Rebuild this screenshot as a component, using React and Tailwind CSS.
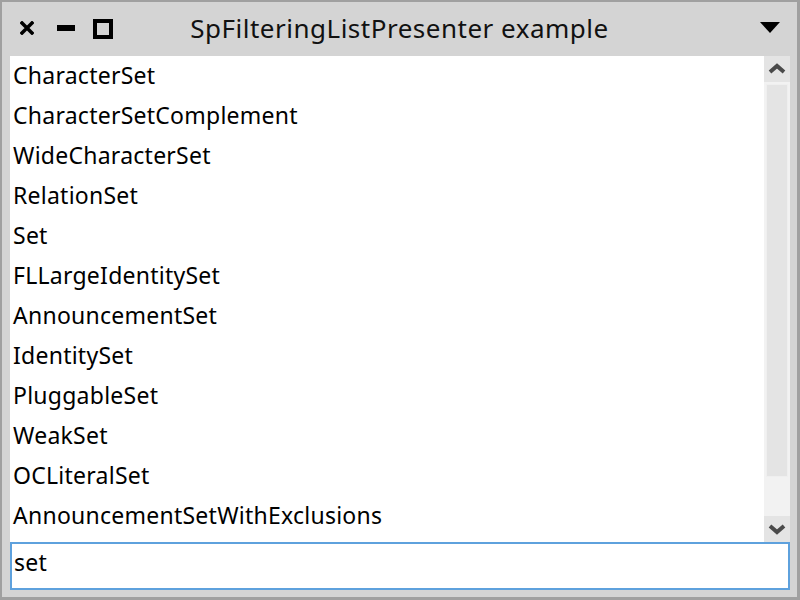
import React from "react";

const items = [
  "CharacterSet",
  "CharacterSetComplement",
  "WideCharacterSet",
  "RelationSet",
  "Set",
  "FLLargeIdentitySet",
  "AnnouncementSet",
  "IdentitySet",
  "PluggableSet",
  "WeakSet",
  "OCLiteralSet",
  "AnnouncementSetWithExclusions",
];

export default function App() {
  return (
    <div
      className="w-[800px] h-[600px] bg-[#d4d4d4] border-[#a0a0a0] border-t-2 border-l-2 border-r-[3px] border-b-[3px] flex flex-col"
      style={{ fontFamily: "'Noto Sans', sans-serif" }}
    >
      <div className="h-[54px] flex items-center relative shrink-0">
        <div className="absolute left-[18px] top-[19px]">
          <svg width="14" height="14" viewBox="0 0 14 14">
            <path d="M2 2 L12 12 M12 2 L2 12" stroke="#000" strokeWidth="3.5" strokeLinecap="square" />
          </svg>
        </div>
        <div className="absolute left-[55px] top-[23px] w-[18px] h-[6px] bg-black" />
        <div className="absolute left-[91px] top-[17px] w-[20px] h-[20px] border-[4px] border-black" />
        <div className="flex-1 text-center text-[26px] tracking-[0.5px] text-[#111] leading-none mt-[-2px]">
          SpFilteringListPresenter example
        </div>
        <div className="absolute left-[758px] top-[20px]">
          <svg width="20" height="12" viewBox="0 0 20 12">
            <path d="M0 0 H20 L10 11 Z" fill="#000" />
          </svg>
        </div>
      </div>
      <div className="flex-1 flex flex-col pl-[8px] pr-[7px] pb-[7px]">
        <div className="flex h-[486px] bg-white">
          <div className="flex-1 flex flex-col pt-0">
            {items.map((it) => (
              <div key={it} className="h-[40px] flex items-center pl-[3px] pb-[1px] text-[23px] tracking-[0.25px] text-black">
                {it}
              </div>
            ))}
          </div>
          <div className="w-[26px] flex flex-col bg-[#f2f2f2]">
            <div className="h-[26px] bg-[#e4e4e4] flex items-center justify-center">
              <svg width="20" height="12" viewBox="0 0 20 12">
                <path d="M3 9 L10 3 L17 9" fill="none" stroke="#4a4a4a" strokeWidth="4" />
              </svg>
            </div>
            <div className="flex-1 px-[2px] pt-[2px] flex flex-col">
              <div className="h-[393px] bg-[#e4e4e4] border border-[#efefef]" />
            </div>
            <div className="h-[26px] bg-[#e4e4e4] flex items-center justify-center">
              <svg width="20" height="12" viewBox="0 0 20 12">
                <path d="M3 3 L10 9 L17 3" fill="none" stroke="#4a4a4a" strokeWidth="4" />
              </svg>
            </div>
          </div>
        </div>
        <div className="h-[48px] bg-white border-2 border-[#5ea1dd] flex items-center pl-[2px] pb-[8px] text-[23px] tracking-[0.25px] text-black">
          set
        </div>
      </div>
    </div>
  );
}
